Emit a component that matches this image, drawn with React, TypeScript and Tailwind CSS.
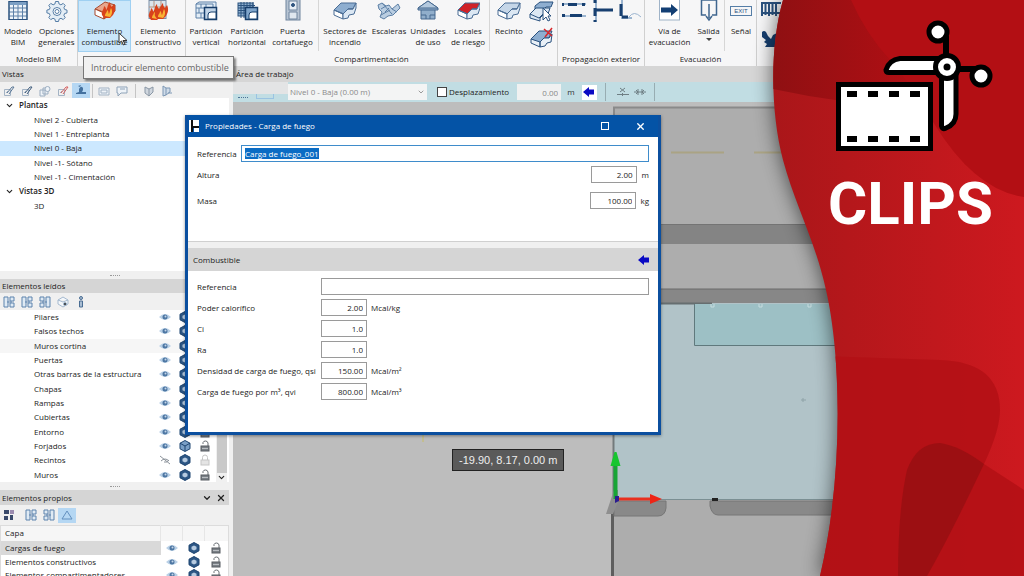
import { useEffect, useRef, type ReactNode } from "react";
import clsx from "clsx";
import { ChevronDown, X } from "lucide-react";

const NAVY = "#2b527f";

/* ---------- ribbon icons ---------- */

const Ico = ({ children, w = 22 }: { children: ReactNode; w?: number }) => (
  <svg width={w} height="22" viewBox={`0 0 ${w} 22`} fill="none" stroke={NAVY} strokeWidth="1">
    {children}
  </svg>
);

const TableIcon = () => (
  <Ico>
    <rect x="2" y="1.500" width="18" height="18" fill="#eef4f9" />
    <path d="M2 3.500h18" strokeWidth="3" stroke="#7da0c4" />
    <path d="M2 8h18M2 12h18M2 16h18M6.500 5v14M11 5v14M15.500 5v14" stroke="#5c80a8" />
    <rect x="2" y="1.500" width="18" height="18" />
  </Ico>
);

const GearIcon = () => (
  <Ico>
    <path
      d="M9.500 1.500h3l.6 2.500 1.800.8 2.300-1.400 2 2-1.300 2.300.8 1.800 2.300.6v2.800l-2.400.6-.7 1.900 1.300 2.200-2 2-2.200-1.300-1.900.8-.6 2.400h-3l-.6-2.400-1.900-.8-2.200 1.300-2-2 1.300-2.200-.8-1.900-2.400-.6v-2.800l2.400-.6.8-1.800-1.300-2.300 2-2 2.300 1.400 1.800-.8z"
      fill="#e4edf5"
      stroke="#557da6"
    />
    <circle cx="11" cy="11.500" r="4" fill="#fff" stroke="#557da6" />
    <circle cx="11" cy="11.500" r="2" stroke="#557da6" />
  </Ico>
);

const Flame = ({ x = 0, y = 0 }: { x?: number; y?: number }) => (
  <g transform={`translate(${x} ${y})`} stroke="none">
    <path d="M0 14C-1 10 2 9 2 5c2 1 2 3 2 4 2-2 1-5 4-8 0 3 1 4 2 5l2-3c2 4 1 8-1 11L8 17H2z" fill="#d8421c" />
    <path d="M3 15c0-3 2-3 2-6 2 1 1 3 2 4 1-2 1-4 2-6 2 3 1 7-1 9z" fill="#f9b233" />
  </g>
);

const BurnBlockIcon = () => (
  <Ico>
    <path d="M1 9 11 2l10 3-9 8z" fill="#e8a68d" stroke="#a8482c" />
    <path d="M1 9v6l9 4v-6z" fill="#fff" stroke="#a8482c" />
    <path d="M10 13v6l11-8V5z" fill="#d9805f" stroke="#a8482c" />
    <Flame x={8} y={1} />
  </Ico>
);

const BurnWallIcon = () => (
  <Ico>
    <rect x="2" y="0.500" width="17" height="18" fill="#dbe4ed" stroke="#7b8ea5" />
    <path d="M2 7h17M2 12h17M7 1v6M13 7v5M14 1v6" stroke="#b7927f" />
    <Flame x={2} y={3} />
    <Flame x={8} y={2} />
  </Ico>
);

const VerticalIcon = () => (
  <Ico w={24}>
    <path d="M2 4l3-2h17v8l-3 2M2 4h17v14H2zM2 8h9M2 13h8M7 4v4M12 4v3M5 8v5M7 13v5" fill="#e3edf6" stroke="#5c80a8" />
    <rect x="10.500" y="7.500" width="12" height="12" fill="#c2d5e8" stroke="#173e6b" strokeWidth="1.500" />
    <path d="M14 19v-4q0-3 3-3h5v7z" fill="#fff" stroke="#173e6b" />
  </Ico>
);

const HorizontalIcon = () => (
  <Ico w={24}>
    <rect x="3" y="3" width="15" height="13" fill="#8fb0d0" />
    <path d="M3 5.500h17M3 8h17M3 10.500h12M3 13h9M6 2v16M9 2v16M12 2v12M15 2v9M18 2v6" />
    <rect x="10.500" y="7.500" width="12" height="12" fill="#7fa5cb" stroke="#173e6b" strokeWidth="1.500" />
    <path d="M14 19v-4q0-3 3-3h5v7z" fill="#fff" stroke="#173e6b" />
  </Ico>
);

const DoorIcon = () => (
  <Ico>
    <rect x="4" y="-1" width="14" height="21" fill="#b7c4d3" stroke="#6f849e" />
    <rect x="7" y="1" width="8" height="9" fill="#e7eef5" stroke="#6f849e" />
    <circle cx="11" cy="5" r="1.500" fill="#33577f" />
    <path d="M7 12h8v7H7z" fill="#dfe7ef" stroke="#6f849e" />
  </Ico>
);

const BlockIcon = ({ top = "#8eaed0", w = 24 }: { top?: string; w?: number }) => (
  <Ico w={w}>
    <g stroke="#4a6d95">
      <path d="M1 10 8 3l15 0-3 6-5 0-4 5z" fill={top} />
      <path d="M1 10v5l9 4v-5z" fill="#fff" />
      <path d="M10 14v5l5-1 1-3 5-1 2-6V3l-3 6h-5z" fill="#dbe7f3" />
      <path d="M1 10l9 4 5-5h5" />
    </g>
  </Ico>
);

const StairsIcon = () => (
  <Ico w={24}>
    <path d="M1 5l4-2 4 3 3-1 3 4 6-5 2 4-7 7-5 1-4 3-4-2 2-5-3-3z" fill="#b9cde1" stroke="#5c7fa5" />
    <path d="M5 3l10 11M4 15l9-5M9 6l-5 3M12 8l-4 4M15 9l5 3" stroke="#5c7fa5" />
  </Ico>
);

const HouseIcon = () => (
  <Ico>
    <path d="M11 1 1 8v2h3v9h14v-9h3V8z" fill="#91aecb" stroke="#47698f" />
    <path d="M4 10h14M4 15h5v4M13 19v-4h5" stroke="#47698f" />
    <path d="M1 8h20L11 1z" fill="#b4c9de" stroke="#47698f" />
  </Ico>
);

const RoomStack = () => (
  <div className="flex flex-col items-center gap-1 px-[2px] pt-px">
    <button aria-label="Seleccionar recinto">
      <svg width="26" height="22" viewBox="0 0 26 22" fill="none" stroke={NAVY}>
        <path d="M6 5l5-4h13l-2 5h-5l-4 4-7-2z" fill="#8eaed0" />
        <path d="M1 13l6-6h14l-2 6h-4l-4 4v3l-10-3z" fill="#dbe7f3" />
        <path d="M1 13l9 4 5-5" />
        <path d="M14 7l8 8-3 0 2 4-2 1-2-4-3 3z" fill="#fff" />
      </svg>
    </button>
    <button aria-label="Eliminar recinto">
      <svg width="26" height="22" viewBox="0 0 26 22" fill="none" stroke={NAVY}>
        <path d="M2 12l8-8h13l-3 7h-5l-4 5z" fill="#8eaed0" />
        <path d="M2 12v4l9 4v-5zM11 15v5l5-1 2-3 4-1 1-8-3 4h-5z" fill="#e9f0f7" />
        <path d="M15 2l8 7M23 1l-7 9" stroke="#d8282c" strokeWidth="1.500" />
      </svg>
    </button>
  </div>
);

const ExitSign = () => (
  <span className="flex h-[22px] items-center">
    <span className="border border-[#557da6] px-[3px] font-['Liberation_Sans'] text-[6px] leading-[8px] text-[#2b527f]">EXIT</span>
  </span>
);

const WayIcon = () => (
  <Ico>
    <rect x="0.500" y="-1" width="20" height="21" fill="#fff" stroke="#9fb3c8" />
    <path d="M2 7.500h10V4l7 6-7 6v-3.500H2z" fill="#133f74" stroke="none" />
  </Ico>
);

const DoorOutIcon = () => (
  <Ico>
    <path d="M8 15H3.500V0h15v15H14" stroke="#3f668f" strokeWidth="1.500" />
    <path d="M11 4v14M8 16l3 4 3-4" stroke="#3f668f" strokeWidth="1.500" />
  </Ico>
);

/* ---------- small icons ---------- */

const Eye = ({ off = false }: { off?: boolean }) => (
  <svg width="12" height="10" viewBox="0 0 12 10">
    {off ? (
      <path d="M1 1l10 8M2 6q4-4 8 0M5 7q3 1 5-2" stroke="#8d949c" fill="none" />
    ) : (
      <>
        <path d="M0 5q6-6 12 0-6 6-12 0z" fill="#b9d0e6" />
        <circle cx="6" cy="5" r="2.500" fill="#4e77a3" />
        <circle cx="6.500" cy="4.500" r="1" fill="#c4d6e8" />
      </>
    )}
  </svg>
);

const Cube = ({ light = false }: { light?: boolean }) => (
  <svg width="12" height="12" viewBox="0 0 12 12">
    <path d="M6 .5l5 2.700v5.600l-5 2.700-5-2.700V3.200z" fill={light ? "#7a9fc6" : "#2c5684"} stroke="#1d4470" />
    {light ? (
      <path d="M1 3.200l5 2.800 5-2.800M6 6v5" stroke="#1d4470" fill="none" />
    ) : (
      <path d="M6 3.500l2.500 1.300v2.400L6 8.500 3.500 7.200V4.800z" fill="#b7cbe0" />
    )}
  </svg>
);

const Lock = ({ faded = false }: { faded?: boolean }) => (
  <svg width="10" height="12" viewBox="0 0 10 12">
    <path d={faded ? "M2.500 6V3.500q0-2.500 2.500-2.500t2.500 2.500V6" : "M3 4V2.500Q3.500 1 5.500 1T8 3v3"} fill="none" stroke={faded ? "#c6c6c6" : "#6b7075"} />
    <rect x="1" y="6" width="8" height="5" fill={faded ? "#e4e4e4" : "#7b8187"} stroke={faded ? "#c6c6c6" : "#565b60"} />
    {!faded && <path d="M2 8.500h6" stroke="#b9bdc1" />}
  </svg>
);

const BlueArrow = () => (
  <svg width="12" height="10" viewBox="0 0 12 10">
    <path d="M0 5l6-5v2.500h5v5H6V10z" fill="#0a0ac4" />
  </svg>
);

const PencilIcon = ({ mark = "#5b7897" }: { mark?: string }) => (
  <svg width="12" height="12" viewBox="0 0 12 12" fill="none" stroke="#a3b3c4">
    <path d="M1.500 4.500h6v6h-6zM3 8l2-2" />
    <path d="M4 8l5-6 2 0-5 7" stroke={mark} />
  </svg>
);

const SheetsIcon = () => (
  <svg width="12" height="12" viewBox="0 0 12 12" fill="#eef3f8" stroke="#9badc0">
    <path d="M1 5h5v6H1zM4 3h5v6H4z" />
    <circle cx="8.500" cy="4" r="2.500" />
  </svg>
);

const GridSplit = ({ flip = false }: { flip?: boolean }) => (
  <svg width="12" height="12" viewBox="0 0 12 12" fill="#dfeaf4" stroke="#5c83ad" className={clsx(flip && "-scale-x-100")}>
    <path d="M1 1h4v10H1zM7 1h4v4H7zM7 7h4v4H7zM4 6h5" />
  </svg>
);

/* ---------- ribbon ---------- */

interface RibbonItemProps {
  icon: ReactNode;
  lines: string[];
  width: string;
  active?: boolean;
  menu?: boolean;
}

const RibbonItem = ({ icon, lines, width, active, menu }: RibbonItemProps) => (
  <button
    className={clsx(
      "flex h-[52px] shrink-0 flex-col items-center gap-[3px]",
      width,
      active && "bg-[#cbe7fa] shadow-[inset_0_0_0_1px_#9fd0f2]"
    )}
  >
    {icon}
    <span className="flex flex-col items-center leading-[11px] whitespace-nowrap">
      {lines.map((l) => (
        <span key={l}>{l}</span>
      ))}
      {menu && <span className="mt-[2px] border-x-3 border-t-3 border-x-transparent border-t-[#444]" />}
    </span>
  </button>
);

const RibbonGroup = ({ title, children }: { title?: string; children: ReactNode }) => (
  <section className="flex shrink-0 flex-col border-r border-[#d0d0d0]">
    <div className="flex h-[52px] justify-center">{children}</div>
    {title && <h2 className="text-center leading-[14px] whitespace-nowrap">{title}</h2>}
  </section>
);

const Rule = () => <span className="mx-px h-[51px] w-px shrink-0 bg-[#d6d6d6]" />;

const Ribbon = () => (
  <header className="flex h-[66px] shrink-0 bg-[#f6f6f7]">
    <RibbonGroup title="Modelo BIM">
      <RibbonItem icon={<TableIcon />} lines={["Modelo", "BIM"]} width="w-[36px]" />
      <RibbonItem icon={<GearIcon />} lines={["Opciones", "generales"]} width="w-[41px]" />
    </RibbonGroup>
    <RibbonGroup>
      <RibbonItem icon={<BurnBlockIcon />} lines={["Elemento", "combustible"]} width="w-[53px]" active />
      <RibbonItem icon={<BurnWallIcon />} lines={["Elemento", "constructivo"]} width="w-[54px]" />
    </RibbonGroup>
    <RibbonGroup title="Compartimentación">
      <RibbonItem icon={<VerticalIcon />} lines={["Partición", "vertical"]} width="w-[40px]" />
      <RibbonItem icon={<HorizontalIcon />} lines={["Partición", "horizontal"]} width="w-[42px]" />
      <RibbonItem icon={<DoorIcon />} lines={["Puerta", "cortafuego"]} width="w-[49px]" />
      <Rule />
      <RibbonItem icon={<BlockIcon />} lines={["Sectores de", "incendio"]} width="w-[50px]" />
      <RibbonItem icon={<StairsIcon />} lines={["Escaleras"]} width="w-[38px]" />
      <RibbonItem icon={<HouseIcon />} lines={["Unidades", "de uso"]} width="w-[40px]" />
      <RibbonItem icon={<BlockIcon top="#cf2228" w={23} />} lines={["Locales", "de riesgo"]} width="w-[40px]" />
      <Rule />
      <RibbonItem icon={<BlockIcon top="#c5d6e8" />} lines={["Recinto"]} width="w-[36px]" />
      <RoomStack />
    </RibbonGroup>
    <RibbonGroup title="Propagación exterior">
      <svg width="86" height="22" viewBox="0 0 86 22" fill="none" stroke="#9bb4cf" strokeWidth="2">
        <path d="M4 4h24M4 16h24M38 0v22M64 0v18h10" />
        <path d="M4 4.500h2M10 4.500h9M24 4.500h3M4 15.500h3M12 15.500h12M37 0v3M37 8v8M37 20v2M38 10h17M63 4v12M64 17h6" stroke="#173f70" strokeWidth="3" />
        <path d="M71 17q5-7 12 0" strokeWidth="1" />
      </svg>
    </RibbonGroup>
    <RibbonGroup title="Evacuación">
      <RibbonItem icon={<WayIcon />} lines={["Vía de", "evacuación"]} width="w-[49px]" />
      <RibbonItem icon={<DoorOutIcon />} lines={["Salida"]} width="w-[29px]" menu />
      <Rule />
      <RibbonItem icon={<ExitSign />} lines={["Señal"]} width="w-[30px]" />
    </RibbonGroup>
    <div className="flex flex-col gap-3 pl-1">
      <svg width="26" height="18" viewBox="0 0 26 18" stroke="#2b527f" strokeWidth="2">
        <path d="M1 2v14M4.500 2v13M8 2v14M11.500 2v13M15 2v14M0 3h20M0 13h20" />
      </svg>
      <svg width="20" height="18" viewBox="0 0 20 18" fill="#173f70">
        <path d="M1 2q2-2 4 0l2 4 3 3 2-4 4-2v14H4l2-3-3-2 2-2-4-3z" />
      </svg>
    </div>
  </header>
);

/* ---------- side panels ---------- */

const levels = [
  { label: "Plantas", group: true },
  { label: "Nivel 2 - Cubierta" },
  { label: "Nivel 1 - Entreplanta" },
  { label: "Nivel 0 - Baja", active: true },
  { label: "Nivel -1- Sótano" },
  { label: "Nivel -1 - Cimentación" },
  { label: "Vistas 3D", group: true },
  { label: "3D" },
];

const elements = [
  "Pilares",
  "Falsos techos",
  "Muros cortina",
  "Puertas",
  "Otras barras de la estructura",
  "Chapas",
  "Rampas",
  "Cubiertas",
  "Entorno",
  "Forjados",
  "Recintos",
  "Muros",
];

const layers = ["Cargas de fuego", "Elementos constructivos", "Elementos compartimentadores"];

const Splitter = () => (
  <div className="flex h-[8px] shrink-0 items-center justify-center bg-[#f0f0f0]">
    <span className="w-[10px] border-t border-dotted border-[#999]" />
  </div>
);

const ToolButton = ({ label, active, children }: { label: string; active?: boolean; children: ReactNode }) => (
  <button
    aria-label={label}
    className={clsx("flex h-[15px] w-[18px] shrink-0 items-center justify-center", active && "bg-[#b5d7f3]")}
  >
    {children}
  </button>
);

const SidePanel = () => (
  <aside className="flex w-[233px] shrink-0 flex-col overflow-hidden bg-[#f0f0f0] pr-[4px]">
    <div className="flex h-[16px] shrink-0 items-center gap-0 pt-px">
      <ToolButton label="Nueva"><PencilIcon /></ToolButton>
      <ToolButton label="Editar"><PencilIcon mark="#3f5c7c" /></ToolButton>
      <ToolButton label="Copiar"><SheetsIcon /></ToolButton>
      <ToolButton label="Eliminar"><PencilIcon mark="#d46060" /></ToolButton>
      <ToolButton label="Vista activa" active>
        <svg width="12" height="12" viewBox="0 0 12 12" fill="#44719f">
          <path d="M4 4q2-4 4-1v2L7 7h4v2H1V8l3-1zM3 1l3-1-1 2z" />
        </svg>
      </ToolButton>
      <span className="mx-[2px] h-[14px] w-px bg-[#c4c4c4]" />
      <ToolButton label="Cámara"><svg width="12" height="12" viewBox="0 0 12 12" fill="#eef3f8" stroke="#a3b3c4"><path d="M1 3h10v7H1zM3 5h6v3H3z" /></svg></ToolButton>
      <ToolButton label="Pantalla"><svg width="12" height="12" viewBox="0 0 12 12" fill="#eef3f8" stroke="#8fa3b8"><path d="M1 2h10v6H5l-3 3V8H1zM4 4h5" /></svg></ToolButton>
      <span className="mx-[4px] h-[14px] w-px bg-[#c4c4c4]" />
      <ToolButton label="Sección"><svg width="12" height="12" viewBox="0 0 12 12" fill="#cfd6de" stroke="#8a97a5"><path d="M2 2l4 2v7L2 8zM6 4l4-2v5l-4 4" /></svg></ToolButton>
      <ToolButton label="Rotar"><svg width="12" height="12" viewBox="0 0 12 12" fill="#cfdbe8" stroke="#7c97b4"><path d="M2 1l3 2v7L2 11zM5 3h4v4l-4 3M7 8l4 0" /></svg></ToolButton>
    </div>

    <div className="h-[173px] shrink-0 bg-white">
      <ul className="grid h-[115px] auto-rows-fr">
        {levels.map(({ label, group, active }) => (
          <li key={label} className={clsx("flex", active && "bg-[#cce8ff]")}>
            <button className={clsx("flex w-full items-center", group ? "gap-[5px] pl-[5px] font-semibold" : "pl-[34px]")}>
              {group && <ChevronDown className="size-[9px]" strokeWidth={3} />}
              {label}
            </button>
          </li>
        ))}
      </ul>
    </div>

    <Splitter />
    <h2 className="h-[14px] shrink-0 bg-[#d5d5d5] pl-[2px] leading-[14px]">Elementos leídos</h2>
    <div className="flex h-[17px] shrink-0 items-center">
      <ToolButton label="Expandir"><GridSplit /></ToolButton>
      <ToolButton label="Contraer"><GridSplit /></ToolButton>
      <ToolButton label="Agrupar"><GridSplit flip /></ToolButton>
      <ToolButton label="Ver cubo">
        <svg width="12" height="12" viewBox="0 0 12 12" fill="#f4f7fa" stroke="#a5bad0"><path d="M1 4l5-3 5 3v4l-5 3-5-3zM1 4l5 2 5-2" /><circle cx="8" cy="8" r="1.500" fill="#222" /></svg>
      </ToolButton>
      <ToolButton label="Información">
        <svg width="12" height="12" viewBox="0 0 12 12" fill="#a9bdd2" stroke="#4a6d93"><circle cx="6" cy="2" r="1.500" /><path d="M4.500 5h3v6h-3z" /></svg>
      </ToolButton>
    </div>

    <div className="flex h-[172px] shrink-0 bg-white">
      <ul className="grid flex-1 auto-rows-fr">
        {elements.map((label) => (
          <li key={label} className={clsx("flex items-center pl-[34px]", label === "Muros cortina" && "bg-[#f6f6f6]")}>
            <span className="flex-1 whitespace-nowrap">{label}</span>
            <span className="flex items-center">
              <span className="flex w-[20px] justify-center"><Eye off={label === "Recintos"} /></span>
              <span className="flex w-[20px] justify-center"><Cube light={label === "Forjados"} /></span>
              <span className="flex w-[20px] justify-center"><Lock faded={label === "Recintos"} /></span>
            </span>
          </li>
        ))}
      </ul>
      <div className="mr-[2px] ml-[1px] flex w-[11px] flex-col items-center bg-[#f0f0f0]">
        <span className="w-[10px] flex-1 bg-[#c9c9c9]" />
        <ChevronDown className="size-[9px]" strokeWidth={3} />
      </div>
    </div>

    <Splitter />
    <div className="flex h-[15px] shrink-0 items-center gap-[4px] bg-[#d5d5d5] pr-[3px] pl-[2px]">
      <h2 className="flex-1">Elementos propios</h2>
      <button aria-label="Plegar"><ChevronDown className="size-[10px]" strokeWidth={3} /></button>
      <button aria-label="Cerrar"><X className="size-[10px]" strokeWidth={3} /></button>
    </div>
    <div className="flex h-[20px] shrink-0 items-center">
      <ToolButton label="Capas">
        <svg width="12" height="12" viewBox="0 0 12 12" fill="#39496b"><path d="M1 1h5v4H1zM1 7h4v4H1zM7 6h3v5H7z" /><path d="M7 1h4v4H7z" fill="#9c8cb0" /></svg>
      </ToolButton>
      <span className="w-[4px]" />
      <ToolButton label="Dividir"><GridSplit /></ToolButton>
      <ToolButton label="Unir"><GridSplit flip /></ToolButton>
      <ToolButton label="Filtro" active>
        <svg width="12" height="12" viewBox="0 0 12 12" fill="none" stroke="#6390bf"><path d="M6 2l5 8H1z" /></svg>
      </ToolButton>
    </div>
    <table className="w-full table-fixed border border-[#dcdcdc] bg-white">
      <thead>
        <tr className="h-[15px] bg-[#f6f6f6]">
          <th className="pl-[4px] text-left font-normal">Capa</th>
          <th className="w-[22px] border-l border-[#e6e6e6]" />
          <th className="w-[22px] border-l border-[#e6e6e6]" />
          <th className="w-[24px] border-l border-[#e6e6e6]" />
        </tr>
      </thead>
      <tbody>
        {layers.map((label, i) => (
          <tr key={label} className="h-[14px]">
            <td className={clsx("pl-[4px] whitespace-nowrap", i === 0 && "bg-[#d9d9d9]")}>{label}</td>
            <td><span className="flex justify-center"><Eye /></span></td>
            <td><span className="flex justify-center"><Cube /></span></td>
            <td><span className="flex justify-center"><Lock /></span></td>
          </tr>
        ))}
      </tbody>
    </table>
  </aside>
);

/* ---------- work area ---------- */

const Plan = () => (
  <svg className="block size-full" viewBox="233 102 791 474" preserveAspectRatio="xMinYMin slice">
    <rect x="233" y="102" width="791" height="474" fill="#bdbdbd" />
    <rect x="614" y="107" width="410" height="469" fill="#adadad" />
    <path d="M614 224V107.500H1024" fill="none" stroke="#8a8a8a" strokeWidth="2" />
    <path d="M671 152.500h53M754 152.500h53" stroke="#aaa384" strokeWidth="2" />
    <rect x="614" y="224" width="410" height="20" fill="#848484" />
    <path d="M614 224.500h410" stroke="#747474" />
    <rect x="614" y="289" width="410" height="14" fill="#878787" />
    <path d="M614 289h410" stroke="#6a6a6a" />
    <rect x="614" y="303" width="410" height="197" fill="#b1c3c8" />
    <path d="M660 303.500h52" stroke="#666e70" strokeWidth="2" />
    <rect x="694" y="304" width="330" height="41" fill="#9dc0c5" />
    <path d="M694.500 304v41.500H1024" stroke="#60797d" fill="none" />
    <path d="M711 304v3h3v-3M759 304v3h3v-3M808 304v3h3v-3" stroke="#c6dcdf" fill="none" />
    <path d="M801 400h5M803 398v4" stroke="#8fa3a8" />
    <path d="M613.500 303v197" stroke="#737a7c" strokeWidth="2" />
    <path d="M612.500 500v76" stroke="#5e5e5e" strokeWidth="3" />
    <path d="M614 499.500h410" stroke="#7b8f93" />
    <path d="M614 501h52v7q-1 8-8 8h-44z" fill="#898989" stroke="#767676" />
    <path d="M710 501h314v14H718q-6 0-8-9z" fill="#898989" stroke="#767676" />
    <path d="M606 514l8-24h4v12l-5 12z" fill="#8f8f8f" />
    <rect x="712" y="498" width="6" height="3" fill="#222" />
    <path d="M615.500 499v-35" stroke="#18a536" strokeWidth="4" />
    <path d="M610.500 466l4-14h2l4 14z" fill="#17c52f" />
    <path d="M615 496h4v5l-4 2z" fill="#2b1c8f" />
    <path d="M619 499h31" stroke="#e8301f" strokeWidth="3" />
    <path d="M650 494l12 5-12 5z" fill="#ee2415" />
    <path d="M423 435v7" stroke="#c9bd62" />
  </svg>
);

const WorkArea = () => (
  <main className="flex min-w-0 flex-1 flex-col">
    <div className="flex h-[20px] shrink-0 items-center bg-[#c1dde3] text-[#6d6d6d]">
      <div className="flex h-full w-[55px] flex-col justify-end bg-[#c1dde3]">
        <div className="h-[12px] bg-[#e3e4e5]" />
        <div className="flex flex-1 gap-[8px] px-[5px]">
          <span className="h-[4px] w-[10px] border-b border-dotted border-[#4c7396]" />
          <span className="h-[5px] w-[18px] border border-t-0 border-[#9ac3e2]" />
        </div>
      </div>
      <div className="relative">
        <select aria-label="Nivel" className="h-[16px] w-[139px] appearance-none bg-[#f3f4f4] pl-[2px] text-[#8a8a8a]">
          <option>Nivel 0 - Baja (0.00 m)</option>
        </select>
        <ChevronDown className="pointer-events-none absolute top-[4px] right-[2px] size-[8px]" />
      </div>
      <label className="ml-[10px] flex items-center gap-[2px] text-[#222]">
        <input type="checkbox" className="size-[10px] appearance-none border border-[#444] bg-white" />
        Desplazamiento
      </label>
      <input aria-label="Desplazamiento en metros" defaultValue="0.00" className="ml-[8px] h-[16px] w-[44px] bg-[#f0f1f1] pr-[3px] text-right text-[#888]" />
      <span className="ml-[6px] text-[#333]">m</span>
      <button aria-label="Aplicar" className="ml-[7px] flex h-[15px] w-[15px] items-center justify-center bg-white"><BlueArrow /></button>
      <span className="ml-[8px] h-[18px] w-px bg-[#98adb2]" />
      <svg className="ml-[10px]" width="32" height="12" viewBox="0 0 32 12" fill="none" stroke="#6f7f84">
        <path d="M1 8.500h12M4 2l5 4M9 2L4 6M6.500 7v3M18 6h12M22 3v6M26 3v6M20 4l2 2-2 2M28 4l-2 2 2 2" />
      </svg>
      <span className="ml-[6px] h-[18px] w-px bg-[#98adb2]" />
    </div>
    <div className="min-h-0 flex-1">
      <Plan />
    </div>
  </main>
);

/* ---------- dialog ---------- */

const fields = [
  { id: "poder", label: "Poder calorífico", value: "2.00", unit: "Mcal/kg" },
  { id: "ci", label: "Ci", value: "1.0", unit: "" },
  { id: "ra", label: "Ra", value: "1.0", unit: "" },
  { id: "qsi", label: "Densidad de carga de fuego, qsi", value: "150.00", unit: "Mcal/m²" },
  { id: "qvi", label: "Carga de fuego por m³, qvi", value: "800.00", unit: "Mcal/m³" },
];

const numberBox = "h-[17px] w-[46px] border border-[#9a9a9a] bg-white pr-[3px] pb-px text-right outline-none";

const PropertiesDialog = () => {
  const ref = useRef<HTMLInputElement>(null);

  useEffect(() => {
    ref.current?.focus();
    ref.current?.select();
  }, []);

  return (
    <div
      role="dialog"
      aria-labelledby="dialog-title"
      className="absolute top-[115px] left-[185px] flex w-[476px] flex-col border-3 border-t-0 border-[#0b4f9f] bg-white pb-[32px] shadow-[0_1px_3px_#0006]"
    >
      <div className="flex h-[22px] items-center bg-[#0453a6] pr-[12px] text-white">
        <svg width="12" height="12" viewBox="0 0 12 12">
          <path d="M3 0h2v12H3z" fill="#111" />
          <path d="M1 0h2v12H1zM5 0h6v6H5zM6 8h5v4H6z" fill="#fff" />
          <path d="M5 6h6v2H5z" fill="#111" />
        </svg>
        <h1 id="dialog-title" className="ml-[5px] flex-1">Propiedades - Carga de fuego</h1>
        <button aria-label="Maximizar" className="mr-[26px] size-[8px] border border-white" />
        <button aria-label="Cerrar diálogo"><X className="size-[11px]" strokeWidth={3} /></button>
      </div>

      <div className="flex h-[104px] flex-col pt-[8px] pr-[9px] pl-[9px]">
        <div className="flex items-center">
          <label htmlFor="ref" className="w-[44px]">Referencia</label>
          <input
            id="ref"
            ref={ref}
            defaultValue="Carga de fuego_001"
            className="h-[17px] min-w-0 flex-1 border border-[#3f8ccb] px-[3px] pb-px outline-none selection:bg-[#0a6cc4] selection:text-white"
          />
        </div>
        <div className="mt-[4px] flex items-center">
          <label htmlFor="altura" className="flex-1">Altura</label>
          <input id="altura" defaultValue="2.00" className={numberBox} />
          <span className="ml-[5px]">m</span>
        </div>
        <div className="mt-[9px] flex items-center">
          <label htmlFor="masa" className="flex-1">Masa</label>
          <input id="masa" defaultValue="100.00" className={numberBox} />
          <span className="ml-[4px]">kg</span>
        </div>
      </div>

      <div className="h-[7px] border-t border-[#d0d0d0] bg-[#f0f0f0]" />
      <div className="flex h-[23px] items-center justify-between bg-[#d5d5d5] pr-[8px] pl-[5px]">
        <h2>Combustible</h2>
        <button aria-label="Importar combustible"><BlueArrow /></button>
      </div>

      <div className="flex flex-col gap-[4px] px-[9px] pt-[7px]">
        <div className="flex items-center">
          <label htmlFor="ref2" className="w-[124px]">Referencia</label>
          <input id="ref2" className="h-[17px] min-w-0 flex-1 border border-[#9a9a9a] outline-none" />
        </div>
        {fields.map(({ id, label, value, unit }) => (
          <div key={id} className="flex items-center">
            <label htmlFor={id} className="w-[124px] whitespace-nowrap">{label}</label>
            <input id={id} defaultValue={value} className={numberBox} />
            <span className="ml-[4px]">{unit}</span>
          </div>
        ))}
      </div>
    </div>
  );
};

/* ---------- banner ---------- */

const EDGE = "M783 0C770 45 770 110 783 160C795 205 815 240 826 290C842 360 843 480 820 576";

const Banner = () => (
  <aside className="absolute inset-y-0 right-0 w-[264px]">
    <svg className="absolute inset-0 size-full overflow-visible" viewBox="760 0 264 576" preserveAspectRatio="none">
      <defs>
        <linearGradient id="red" x1="0" x2="1">
          <stop offset="0" stopColor="#a81619" />
          <stop offset="1" stopColor="#cd191f" />
        </linearGradient>
        <linearGradient id="deep" x1="0" x2="1">
          <stop offset="0" stopColor="#8c1012" />
          <stop offset="1" stopColor="#b30f14" />
        </linearGradient>
        <filter id="soft" x="-20%" width="140%">
          <feGaussianBlur stdDeviation="10" />
        </filter>
        <clipPath id="wave">
          <path d={`${EDGE}H1024V0z`} />
        </clipPath>
      </defs>
      <path d={`${EDGE}H1024V0z`} fill="#000" opacity="0.6" filter="url(#soft)" />
      <g clipPath="url(#wave)">
        <rect x="760" width="264" height="576" fill="url(#red)" />
        <path d="M760 86Q840 105 925 108V0H760z" fill="url(#deep)" />
        <path d="M851 0Q866 34 890 60Q915 90 935 125Q975 190 1024 197V0z" fill="#b30f14" />
        <path d="M820 356L940 360Q1000 362 1000 410Q1000 430 984 464L1024 490V576H800z" fill="#b31015" opacity="0.85" />
        <path d="M898 576Q898 510 907 470Q917 443 940 443Q960 446 984 464Q950 536 927 576z" fill="#960f12" opacity="0.8" />
      </g>
    </svg>
    <svg className="absolute top-[18px] left-[74px]" width="162" height="136" viewBox="834 18 162 136" fill="#fff" stroke="#000" strokeWidth="5">
      <path d="M946 36V58M958 69H976" strokeWidth="6" fill="none" />
      <circle cx="938" cy="32" r="9" />
      <circle cx="981" cy="76" r="9" />
      <path d="M938 58.500H900Q889 60 886 70Q886 72.500 889 72.500H938z" />
      <path d="M941.500 76V126Q942 130 946 128Q956 124 956 114V76z" />
      <circle cx="947" cy="67" r="11.500" />
      <circle cx="947" cy="67" r="3.500" fill="#000" stroke="none" />
      <rect x="838.500" y="84.500" width="92" height="64" />
      <g fill="#000" stroke="none">
        {[847, 868, 889, 910].map((x) => (
          <g key={x}>
            <rect x={x} y="91" width="10" height="6" />
            <rect x={x} y="136" width="10" height="6" />
          </g>
        ))}
      </g>
    </svg>
    <p className="relative pt-[166px] pl-[68px] font-[Roboto,sans-serif] text-[60px] leading-[76px] font-bold text-white">
      CLIPS
    </p>
  </aside>
);

export default function App() {
  return (
    <div className="relative flex h-screen w-full flex-col overflow-hidden bg-[#f0f0f0] font-['Open_Sans','Noto_Sans',sans-serif] text-[8px] leading-[12px] text-[#222]">
      <Ribbon />
      <div className="flex h-[16px] shrink-0 items-center bg-[#d6d6d6]">
        <h2 className="w-[236px] pl-[2px]">Vistas</h2>
        <h2>Área de trabajo</h2>
      </div>
      <div className="flex min-h-0 flex-1">
        <SidePanel />
        <WorkArea />
      </div>

      <div role="tooltip" className="absolute top-[56px] left-[83px] border border-[#777] bg-[#f1f1f1] pt-[3px] pr-[4px] pb-[3px] pl-[7px] text-[9px] leading-[15px] whitespace-nowrap text-[#666] shadow-[2px_2px_2px_#0007]">
        Introducir elemento combustible
      </div>
      <svg className="absolute top-[32px] left-[118px]" width="10" height="14" viewBox="0 0 10 14">
        <path d="M1 1v10l2.500-2 2 4 1.500-1-2-3.500H9z" fill="#fff" stroke="#333" />
      </svg>

      <PropertiesDialog />

      <div className="absolute top-[449px] left-[452px] border border-[#222] bg-[#5a5a5a] px-[6px] font-['Liberation_Sans',sans-serif] text-[11px] leading-[20px] whitespace-nowrap text-[#eee]">
        -19.90, 8.17, 0.00 m
      </div>

      <Banner />
    </div>
  );
}
